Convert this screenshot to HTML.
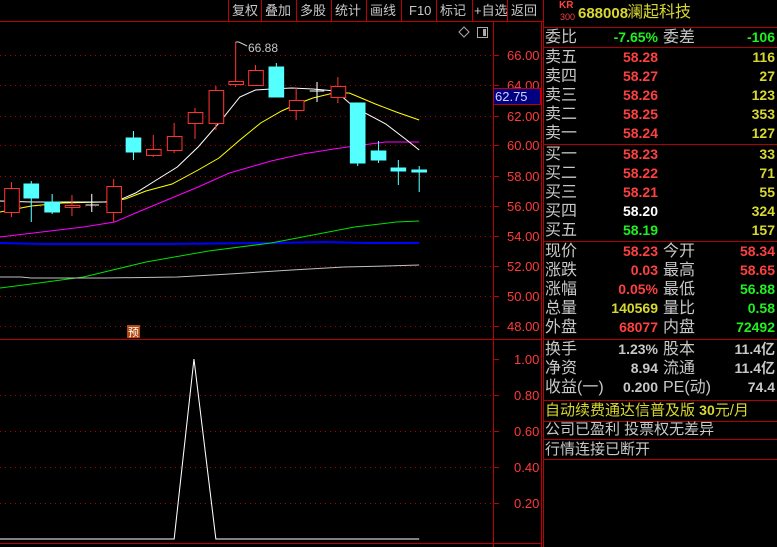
<!DOCTYPE html>
<html><head><meta charset="utf-8"><style>
body{margin:0;width:777px;height:547px;background:#000;overflow:hidden;position:relative;font-family:"Liberation Sans","Noto Sans CJK SC",sans-serif}
.t{position:absolute;white-space:nowrap;line-height:19px;height:19px}
.lb{color:#c8c8c8;font-size:16px;left:545px}
.l2{color:#c8c8c8;font-size:16px;left:663px}
.n{font-weight:bold;font-size:14px;text-align:right}
.p{right:119px}.v{right:2px}
.r{color:#ff4040}.g{color:#20f020}.y{color:#d8d830}.w{color:#fff}.s{color:#c8c8c8}
.tb{position:absolute;top:2px;color:#c8c8c8;font-size:13px;line-height:18px}
.hl{position:absolute;left:543px;width:234px;height:1px;background:#b00000}
</style></head><body>
<svg width="777" height="547" style="position:absolute;left:0;top:0">
<!-- toolbar -->
<line x1="0" y1="21.5" x2="543" y2="21.5" stroke="#c00000"/>
<g stroke="#c00000">
<line x1="228.5" y1="0" x2="228.5" y2="21"/><line x1="261.5" y1="0" x2="261.5" y2="21"/><line x1="296.5" y1="0" x2="296.5" y2="21"/><line x1="331.5" y1="0" x2="331.5" y2="21"/><line x1="366.5" y1="0" x2="366.5" y2="21"/><line x1="401.5" y1="0" x2="401.5" y2="21"/><line x1="436.5" y1="0" x2="436.5" y2="21"/><line x1="472.5" y1="0" x2="472.5" y2="21"/><line x1="507.5" y1="0" x2="507.5" y2="21"/>
<line x1="493.5" y1="21" x2="493.5" y2="547"/>
<line x1="541.5" y1="21" x2="541.5" y2="547"/>
<line x1="543.5" y1="0" x2="543.5" y2="547"/>
<line x1="0" y1="339.5" x2="541" y2="339.5"/>
<line x1="0" y1="543.5" x2="541" y2="543.5"/>
</g>
<!-- grid -->
<g stroke="#b00000" stroke-dasharray="1 4">
<line x1="0" y1="55.5" x2="493" y2="55.5"/><line x1="0" y1="85.5" x2="493" y2="85.5"/><line x1="0" y1="116.5" x2="493" y2="116.5"/><line x1="0" y1="145.5" x2="493" y2="145.5"/><line x1="0" y1="176.5" x2="493" y2="176.5"/><line x1="0" y1="206.5" x2="493" y2="206.5"/><line x1="0" y1="236.5" x2="493" y2="236.5"/><line x1="0" y1="266.5" x2="493" y2="266.5"/><line x1="0" y1="296.5" x2="493" y2="296.5"/><line x1="0" y1="326.5" x2="493" y2="326.5"/>
<line x1="0" y1="395.5" x2="493" y2="395.5"/><line x1="0" y1="431.5" x2="493" y2="431.5"/><line x1="0" y1="467.5" x2="493" y2="467.5"/><line x1="0" y1="503.5" x2="493" y2="503.5"/>
</g>
<g stroke="#c00000">
<line x1="493" y1="55.5" x2="499" y2="55.5"/><line x1="493" y1="85.5" x2="499" y2="85.5"/><line x1="493" y1="116.5" x2="499" y2="116.5"/><line x1="493" y1="145.5" x2="499" y2="145.5"/><line x1="493" y1="176.5" x2="499" y2="176.5"/><line x1="493" y1="206.5" x2="499" y2="206.5"/><line x1="493" y1="236.5" x2="499" y2="236.5"/><line x1="493" y1="266.5" x2="499" y2="266.5"/><line x1="493" y1="296.5" x2="499" y2="296.5"/><line x1="493" y1="326.5" x2="499" y2="326.5"/>
<line x1="493" y1="359.5" x2="499" y2="359.5"/><line x1="493" y1="395.5" x2="499" y2="395.5"/><line x1="493" y1="431.5" x2="499" y2="431.5"/><line x1="493" y1="467.5" x2="499" y2="467.5"/><line x1="493" y1="503.5" x2="499" y2="503.5"/>
</g>
<g fill="#ff3a3a" font-size="13" font-family="Liberation Sans">
<text x="507" y="60">66.00</text><text x="507" y="90">64.00</text><text x="507" y="121">62.00</text><text x="507" y="150">60.00</text><text x="507" y="181">58.00</text><text x="507" y="211">56.00</text><text x="507" y="241">54.00</text><text x="507" y="271">52.00</text><text x="507" y="301">50.00</text><text x="507" y="331">48.00</text>
<text x="514" y="364">1.00</text><text x="514" y="400">0.80</text><text x="514" y="436">0.60</text><text x="514" y="472">0.40</text><text x="514" y="508">0.20</text>
</g>
<rect x="493.5" y="88.5" width="47" height="16" fill="#000080" stroke="#c00000"/>
<text x="495" y="101" fill="#d0d0ff" font-size="13" font-family="Liberation Sans">62.75</text>
<path d="M464 27 L469 32 L464 37 L459 32 Z" fill="none" stroke="#aaa"/>
<rect x="477.5" y="27.5" width="10" height="10" fill="none" stroke="#aaa"/><rect x="483" y="29" width="3" height="7" fill="#aaa"/>
<!-- chart -->
<g transform="scale(1.0428 1)">
<g fill="none" stroke-width="1">
<polyline stroke="#ff00ff" points="0,237 40,232 80,227 110,222 130,213 160,200 190,187 220,173 240,167 260,161 290,154 320,149 340,146 370,142 402,142"/>
<polyline stroke="#0000ff" stroke-width="2" points="0,243 40,244 160,244 260,243 312,242 350,243 402,243"/>
<polyline stroke="#00e000" points="0,288 30,284 80,277 140,262 200,251 260,243 300,235 340,227 380,222 402,221"/>
<polyline stroke="#c0c0c0" points="0,277 20,277 30,278 100,278 170,277 220,274 280,270 330,267 370,266 402,265"/>
<polyline stroke="#ffff00" points="0,212 30,206 60,203 100,202 120,199 140,191 165,184 190,170 210,158 230,140 250,123 270,111 285,104 300,98 320,93 335,93 360,104 380,112 402,120"/>
<polyline stroke="#ffffff" points="0,201 30,202 60,202 90,202 110,202 130,193 150,180 170,167 190,147 210,123 230,97 245,90 260,89 280,88 300,89 322,91 335,103 350,113 370,124 390,140 402,150"/>
</g>
<g stroke="#ff3030" fill="#000">
<line x1="11" y1="182" x2="11" y2="217"/><rect x="4.5" y="188.5" width="14" height="24"/>
<line x1="69" y1="195" x2="69" y2="216"/><rect x="62.5" y="205.5" width="14" height="2"/>
<line x1="109" y1="179" x2="109" y2="222"/><rect x="102.5" y="186.5" width="14" height="26"/>
<line x1="147" y1="135" x2="147" y2="157"/><rect x="140.5" y="149.5" width="14" height="6"/>
<line x1="167" y1="123" x2="167" y2="153"/><rect x="160.5" y="136.5" width="14" height="14"/>
<line x1="187" y1="108" x2="187" y2="139"/><rect x="180.5" y="112.5" width="14" height="11"/>
<line x1="207" y1="86" x2="207" y2="130"/><rect x="200.5" y="90.5" width="14" height="33"/>
<line x1="226" y1="42" x2="226" y2="87"/><rect x="219.5" y="81.5" width="14" height="3"/>
<line x1="245" y1="65" x2="245" y2="85"/><rect x="238.5" y="70.5" width="14" height="15"/>
<line x1="284" y1="88" x2="284" y2="120"/><rect x="277.5" y="100.5" width="14" height="10"/>
<line x1="324" y1="77" x2="324" y2="103"/><rect x="317.5" y="86.5" width="14" height="11"/>
</g>
<g fill="#54ffff" stroke="#54ffff">
<line x1="30" y1="181" x2="30" y2="222"/><rect x="23" y="184" width="14" height="14"/>
<line x1="50" y1="194" x2="50" y2="214"/><rect x="43" y="202" width="14" height="10"/>
<line x1="128" y1="131" x2="128" y2="160"/><rect x="121" y="138" width="14" height="14"/>
<line x1="265" y1="63" x2="265" y2="97"/><rect x="258" y="67" width="14" height="30"/>
<line x1="343" y1="103" x2="343" y2="166"/><rect x="336" y="103" width="14" height="60"/>
<line x1="363" y1="141" x2="363" y2="163"/><rect x="356" y="151" width="14" height="9"/>
<line x1="382" y1="160" x2="382" y2="185"/><rect x="375" y="168" width="14" height="3"/>
<line x1="402" y1="166" x2="402" y2="192"/><rect x="395" y="170" width="14" height="2"/>
</g>
<g stroke="#fff">
<line x1="88" y1="194" x2="88" y2="212"/><line x1="82" y1="205" x2="95" y2="205"/>
<line x1="304" y1="82" x2="304" y2="102"/><line x1="297" y1="91" x2="311" y2="91"/>
<polyline fill="none" points="0,539 167,539 186,359 207,539 402,539"/>
<polyline fill="none" stroke="#ccc" points="226,42 229,42 237,46"/>
</g>
</g>
<text x="248" y="52" fill="#c8c8c8" font-size="12" font-family="Liberation Sans">66.88</text>
<rect x="127" y="325" width="13" height="13" fill="#b04810"/>
<text x="128" y="336" fill="#fff" font-size="11" font-family="Noto Sans CJK SC">预</text>
<!-- right panel lines -->
</svg>
<div class="tb" style="left:232px">复权</div><div class="tb" style="left:265px">叠加</div><div class="tb" style="left:300px">多股</div><div class="tb" style="left:335px">统计</div><div class="tb" style="left:370px">画线</div><div class="tb" style="left:409px">F10</div><div class="tb" style="left:440px">标记</div><div class="tb" style="left:474px">+自选</div><div class="tb" style="left:511px">返回</div>

<div class="hl" style="top:27px"></div><div class="hl" style="top:47px"></div><div class="hl" style="top:144px"></div><div class="hl" style="top:241px"></div><div class="hl" style="top:339px"></div><div class="hl" style="top:400px"></div><div class="hl" style="top:421px"></div><div class="hl" style="top:439px"></div><div class="hl" style="top:459px"></div>

<div class="t r" style="left:559px;top:1px;font-size:10px;line-height:10px;font-weight:bold">KR</div>
<div class="t r" style="left:560px;top:12px;font-size:9px;line-height:10px">300</div>
<div class="t y" style="left:578px;top:4px;font-size:15px;font-weight:bold">688008</div>
<div class="t y" style="left:627px;top:3px;font-size:16px">澜起科技</div>

<div class="t lb" style="top:28px">委比</div><div class="t n g p" style="top:28px">-7.65%</div><div class="t l2" style="top:28px">委差</div><div class="t n g v" style="top:28px">-106</div>

<div class="t lb" style="top:48px">卖五</div><div class="t n r p" style="top:48px">58.28</div><div class="t n y v" style="top:48px">116</div>
<div class="t lb" style="top:67px">卖四</div><div class="t n r p" style="top:67px">58.27</div><div class="t n y v" style="top:67px">27</div>
<div class="t lb" style="top:86px">卖三</div><div class="t n r p" style="top:86px">58.26</div><div class="t n y v" style="top:86px">123</div>
<div class="t lb" style="top:105px">卖二</div><div class="t n r p" style="top:105px">58.25</div><div class="t n y v" style="top:105px">353</div>
<div class="t lb" style="top:124px">卖一</div><div class="t n r p" style="top:124px">58.24</div><div class="t n y v" style="top:124px">127</div>

<div class="t lb" style="top:145px">买一</div><div class="t n r p" style="top:145px">58.23</div><div class="t n y v" style="top:145px">33</div>
<div class="t lb" style="top:164px">买二</div><div class="t n r p" style="top:164px">58.22</div><div class="t n y v" style="top:164px">71</div>
<div class="t lb" style="top:183px">买三</div><div class="t n r p" style="top:183px">58.21</div><div class="t n y v" style="top:183px">55</div>
<div class="t lb" style="top:202px">买四</div><div class="t n w p" style="top:202px">58.20</div><div class="t n y v" style="top:202px">324</div>
<div class="t lb" style="top:221px">买五</div><div class="t n g p" style="top:221px">58.19</div><div class="t n y v" style="top:221px">157</div>

<div class="t lb" style="top:242px">现价</div><div class="t n r p" style="top:242px">58.23</div><div class="t l2" style="top:242px">今开</div><div class="t n r v" style="top:242px">58.34</div>
<div class="t lb" style="top:261px">涨跌</div><div class="t n r p" style="top:261px">0.03</div><div class="t l2" style="top:261px">最高</div><div class="t n r v" style="top:261px">58.65</div>
<div class="t lb" style="top:280px">涨幅</div><div class="t n r p" style="top:280px">0.05%</div><div class="t l2" style="top:280px">最低</div><div class="t n g v" style="top:280px">56.88</div>
<div class="t lb" style="top:299px">总量</div><div class="t n y p" style="top:299px">140569</div><div class="t l2" style="top:299px">量比</div><div class="t n g v" style="top:299px">0.58</div>
<div class="t lb" style="top:318px">外盘</div><div class="t n r p" style="top:318px">68077</div><div class="t l2" style="top:318px">内盘</div><div class="t n g v" style="top:318px">72492</div>

<div class="t lb" style="top:340px">换手</div><div class="t n s p" style="top:340px">1.23%</div><div class="t l2" style="top:340px">股本</div><div class="t n s v" style="top:340px">11.4亿</div>
<div class="t lb" style="top:359px">净资</div><div class="t n s p" style="top:359px">8.94</div><div class="t l2" style="top:359px">流通</div><div class="t n s v" style="top:359px">11.4亿</div>
<div class="t lb" style="top:378px">收益(一)</div><div class="t n s p" style="top:378px">0.200</div><div class="t l2" style="top:378px">PE(动)</div><div class="t n s v" style="top:378px">74.4</div>

<div class="t y" style="left:545px;top:401px;font-size:15px">自动续费通达信普及版 <b style="font-size:14px">30</b>元/月</div>
<div class="t s" style="left:545px;top:420px;font-size:15px">公司已盈利 投票权无差异</div>
<div class="t s" style="left:545px;top:440px;font-size:15px">行情连接已断开</div>
</body></html>
